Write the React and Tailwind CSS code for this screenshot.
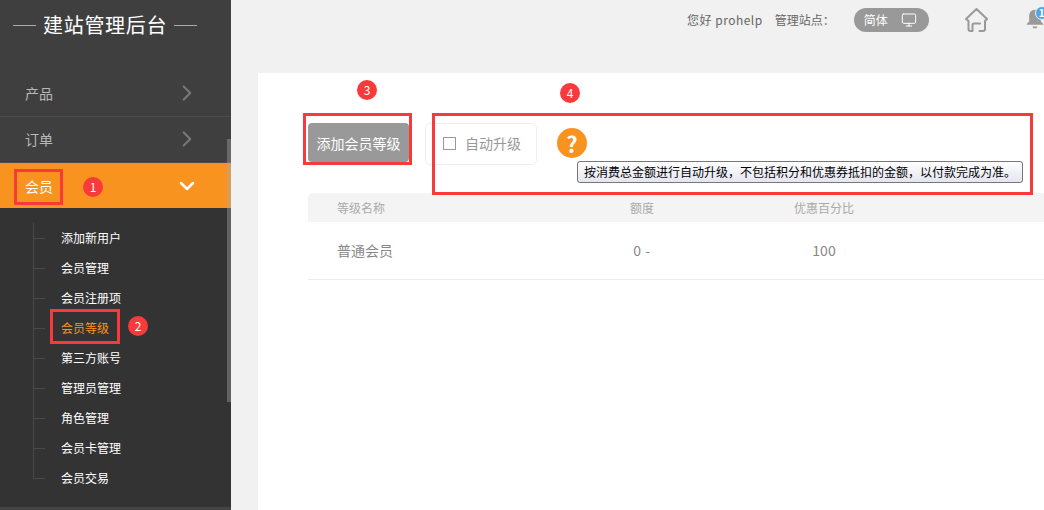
import { ChevronRight, ChevronDown, Monitor } from 'lucide-react'

const subItems = ['添加新用户', '会员管理', '会员注册项', '会员等级', '第三方账号', '管理员管理', '角色管理', '会员卡管理', '会员交易']

// Red annotation frames and numbered dots sit on top of the screenshot
const frames = [
  'left-[14px] top-[169px] w-[49px] h-[36px]',
  'left-[50px] top-[309px] w-[70px] h-[35px]',
  'left-[303px] top-[113px] w-[109px] h-[52px]',
  'left-[432px] top-[113px] w-[601px] h-[82px]',
]
const dots = [
  { n: 1, pos: 'left-[83px] top-[177px]' },
  { n: 2, pos: 'left-[128px] top-[316px]' },
  { n: 3, pos: 'left-[357px] top-[80px]' },
  { n: 4, pos: 'left-[560px] top-[83px]' },
]

function MenuRow({ label, height }) {
  return (
    <div className={`flex items-center justify-between border-b border-[#4b4b4b] pb-[2px] pl-[25px] pr-[37px] text-sm text-[#b9b9b9] ${height}`}>
      <span>{label}</span>
      <ChevronRight size={26} strokeWidth={2} className="-mr-[6px] text-[#777]" />
    </div>
  )
}

function Sidebar() {
  return (
    <aside className="flex w-[231px] shrink-0 flex-col bg-[#3f3f3f]">
      <div className="flex h-[72px] items-start gap-[7px] pl-[13px] pt-[10px] text-white">
        <span className="mt-[15px] h-[1px] w-[23px] bg-[#aaa]" />
        <h1 className="text-[20px] leading-[30px] tracking-[0.7px]">建站管理后台</h1>
        <span className="mt-[15px] h-[1px] w-[23px] bg-[#aaa]" />
      </div>
      <MenuRow label="产品" height="h-[45px]" />
      <MenuRow label="订单" height="h-[46px]" />
      <div className="flex h-[45px] items-center justify-between bg-[#f9931f] pl-[25px] pr-[36px] text-sm text-white">
        <span>会员</span>
        <ChevronDown size={24} strokeWidth={2.5} className="-mr-[4px]" />
      </div>
      <div className="flex-1 bg-[#333] pt-[15px]">
        <ul className="relative ml-[33px] w-fit">
          <span className="absolute bottom-[14px] left-0 top-0 w-[1px] bg-[#4a4a4a]" />
          {subItems.map((item) => (
            <li key={item} className={`flex h-[30px] items-center pl-[1px] text-xs ${item === '会员等级' ? 'text-[#f9931f]' : 'text-white'}`}>
              <span className="mr-[16px] h-[1px] w-[11px] bg-[#4a4a4a]" />
              {item}
            </li>
          ))}
        </ul>
      </div>
      <div className="h-[3px] bg-[#444]" />
    </aside>
  )
}

function TopBar() {
  return (
    <header className="flex h-[73px] shrink-0 items-start pl-[456px] text-xs text-[#666]">
      <span className="mt-[11px] whitespace-nowrap leading-[18px] tracking-[0.5px]">您好 prohelp</span>
      <span className="ml-[12px] mt-[11px] whitespace-nowrap leading-[18px]">管理站点：</span>
      <div className="ml-[19px] mt-[8px] flex h-[24px] w-[75px] shrink-0 items-center rounded-full bg-[#999] pl-[10px] text-white">
        简体
        <Monitor size={16} strokeWidth={1.5} className="ml-[13px]" />
      </div>
      <svg viewBox="0 0 23 24" className="ml-[36px] mt-[8px] h-[24px] w-[23px] shrink-0" fill="none" stroke="#999" strokeWidth="2" strokeLinejoin="round" strokeLinecap="round">
        <path d="M3.500 13 1 11 11.500 1 22 11l-2 2v8q0 2-2 2h-3.500M3.500 13v8q0 2 2 2h2V17q0-1.500 1.500-1.500h6" />
      </svg>
      <div className="relative ml-[37px] mt-[7px] shrink-0">
        <svg viewBox="0 0 24 26" className="h-[24px] w-[20px]" fill="#999">
          <path d="M12 2c-5 0-7 4-7 8v6l-3 3v1h20v-1l-3-3v-6c0-4-2-8-7-8ZM9 22h6l-1 2h-4Z" />
        </svg>
        <span className="absolute left-[10px] top-[-1px] flex h-[14px] w-[14px] items-center justify-center rounded-full border border-[#eef3f7] bg-[#4ea6e6] text-[10px] font-bold text-white">1</span>
      </div>
    </header>
  )
}

function Card() {
  return (
    <section className="relative ml-[27px] flex-1 bg-white pl-[50px] pt-[50px]">
      <div className="flex h-[70px] items-start">
        <button className="h-[39px] w-[101px] rounded-[4px] bg-[#999] text-sm text-white">添加会员等级</button>
        <label className="ml-[16px] flex h-[42px] w-[112px] items-center rounded-[5px] border border-[#f0f0f0] pb-[2px] pl-[17px] text-sm text-[#999]">
          <span className="mr-[9px] h-[13px] w-[13px] border border-[#999]" />
          自动升级
        </label>
        <span className="ml-[20px] mt-[5px] flex h-[30px] w-[30px] items-center justify-center rounded-full bg-[#f9931f] text-[22px] font-bold leading-none text-white">?</span>
      </div>
      <div className="grid h-[29px] grid-cols-[244px_180px_184px_1fr] items-center rounded-tl-[5px] bg-[#f4f4f4] text-xs text-[#aaa]">
        <span className="pl-[29px]">等级名称</span>
        <span className="text-center">额度</span>
        <span className="text-center">优惠百分比</span>
      </div>
      <div className="grid h-[58px] grid-cols-[244px_180px_184px_1fr] items-center border-b border-[#eee] pb-[2px] text-sm text-[#888]">
        <span className="pl-[29px]">普通会员</span>
        <span className="text-center tracking-[0.5px]">0 -</span>
        <span className="text-center">100</span>
      </div>
      <div className="absolute left-[319px] top-[88px] h-[22px] w-[446px] whitespace-nowrap rounded-[3px] border border-[#777] bg-gradient-to-b from-white to-[#e4e5f0] pl-[6px] text-xs leading-[20px] text-black">
        按消费总金额进行自动升级，不包括积分和优惠券抵扣的金额，以付款完成为准。
      </div>
    </section>
  )
}

export default function App() {
  return (
    <div className="relative flex h-[510px] w-[1044px] overflow-hidden bg-[#f1f1f1] font-['Noto_Sans_CJK_SC','Liberation_Sans',sans-serif]">
      <Sidebar />
      <main className="flex min-w-0 flex-1 flex-col">
        <TopBar />
        <Card />
      </main>
      <div className="absolute left-[227px] top-[139px] h-[263px] w-[4px] bg-[#aaa]/40" />
      {frames.map((pos) => (
        <div key={pos} className={`absolute border-[3px] border-[#f83a3d] ${pos}`} />
      ))}
      {dots.map(({ n, pos }) => (
        <span key={n} className={`absolute flex h-[20px] w-[20px] items-center justify-center rounded-full bg-[#f83a3d] text-xs text-white ${pos}`}>{n}</span>
      ))}
    </div>
  )
}
